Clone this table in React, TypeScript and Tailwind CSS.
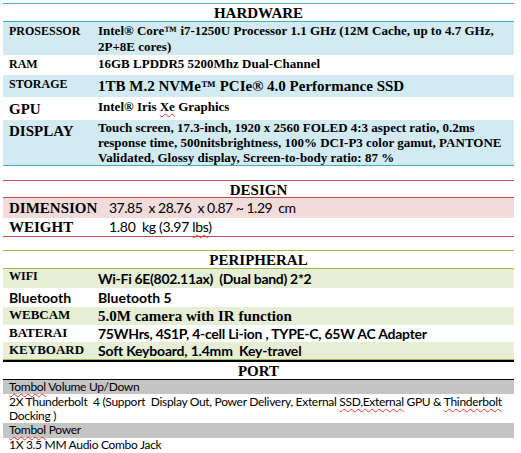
import React from 'react';

const serif = "font-['Liberation_Serif','Times_New_Roman',serif]";
const sans = "font-['Lato','Liberation_Sans',sans-serif]";
const squiggle = 'underline decoration-wavy decoration-[#e33] decoration-1 underline-offset-2';

const App = () => {
  return (
    <div className="w-[521px] h-[453px] bg-white text-black overflow-hidden pt-[3px]">
      <div className="ml-[3px] w-[511px]">
        {/* HARDWARE */}
        <div className="border-y border-[#4bacc6]">
          <div className={`${serif} h-[18px] border-b border-[#4bacc6] text-center text-[15px] leading-[18px] font-bold`}>
            HARDWARE
          </div>
          <div className={`${serif} flex h-[33px] bg-[#d2eaf1] font-bold`}>
            <div className="w-[95px] pl-[6px] pt-[1px] text-[12px] leading-[16px]">PROSESSOR</div>
            <div className="flex-1 pt-[1px] text-[13px] leading-[16px]">
              Intel® Core™ i7-1250U Processor 1.1 GHz (12M Cache, up to 4.7 GHz,
              <br />
              2P+8E cores)
            </div>
          </div>
          <div className={`${serif} flex h-[20px] font-bold`}>
            <div className="w-[95px] pl-[6px] text-[12px] leading-[18px]">RAM</div>
            <div className="flex-1 text-[13px] leading-[18px]">16GB LPDDR5 5200Mhz Dual-Channel</div>
          </div>
          <div className={`${serif} flex h-[22px] bg-[#d2eaf1] font-bold`}>
            <div className="w-[95px] pl-[6px] text-[12px] leading-[18px]">STORAGE</div>
            <div className="flex-1 text-[15px] leading-[22px]">1TB M.2 NVMe™ PCIe® 4.0 Performance SSD</div>
          </div>
          <div className={`${serif} flex h-[23px] font-bold`}>
            <div className="w-[95px] pl-[6px] text-[15px] leading-[24px]">GPU</div>
            <div className="flex-1 text-[13px] leading-[20px]">
              Intel® Iris <span className={squiggle}>Xe</span> Graphics
            </div>
          </div>
          <div className={`${serif} flex h-[45px] bg-[#d2eaf1] font-bold`}>
            <div className="w-[95px] pl-[6px] text-[15px] leading-[22px]">DISPLAY</div>
            <div className="flex-1 text-[13px] leading-[15px] pr-[8px]">
              Touch screen, 17.3-inch, 1920 x 2560 FOLED 4:3 aspect ratio, 0.2ms response time, 500nitsbrightness, 100% DCI-P3 color gamut, PANTONE Validated, Glossy display, Screen-to-body ratio: 87 %
            </div>
          </div>
        </div>

        {/* DESIGN */}
        <div className="mt-[14px] border-y border-[#c0504d]">
          <div className={`${serif} h-[17px] border-b border-[#c0504d] text-center text-[15px] leading-[18px] font-bold`}>
            DESIGN
          </div>
          <div className="flex h-[20px] bg-[#f2dbdb]">
            <div className={`${serif} w-[106px] pl-[6px] text-[15px] leading-[20px] font-bold`}>DIMENSION</div>
            <div className={`${sans} flex-1 text-[14px] leading-[20px] tracking-[-0.5px]`}>37.85&nbsp; x 28.76&nbsp; x 0.87 ~ 1.29&nbsp; cm</div>
          </div>
          <div className="flex h-[18px]">
            <div className={`${serif} w-[106px] pl-[6px] text-[15px] leading-[18px] font-bold`}>WEIGHT</div>
            <div className={`${sans} flex-1 text-[14px] leading-[18px] tracking-[-0.3px]`}>
              1.80&nbsp; kg (3.97 <span className={squiggle}>lbs</span>)
            </div>
          </div>
        </div>

        {/* PERIPHERAL */}
        <div className="mt-[13px] border-t border-[#9bbb59]">
          <div className={`${serif} h-[18px] border-b border-[#9bbb59] text-center text-[15px] leading-[19px] font-bold`}>
            PERIPHERAL
          </div>
          <div className="flex h-[19px] bg-[#e6eed5] font-bold">
            <div className={`${serif} w-[95px] pl-[6px] text-[12px] leading-[14px]`}>WIFI</div>
            <div className={`${sans} flex-1 text-[14px] leading-[19px] tracking-[-0.3px]`}>Wi-Fi 6E(802.11ax)&nbsp; (Dual band) 2*2</div>
          </div>
          <div className="flex h-[19px] font-bold">
            <div className={`${sans} w-[95px] pl-[6px] text-[14px] leading-[19px]`}>Bluetooth</div>
            <div className={`${sans} flex-1 text-[14px] leading-[19px]`}>Bluetooth 5</div>
          </div>
          <div className="flex h-[18px] bg-[#e6eed5] font-bold">
            <div className={`${serif} w-[95px] pl-[6px] text-[13px] leading-[15px]`}>WEBCAM</div>
            <div className={`${serif} flex-1 text-[15px] leading-[19px]`}>5.0M camera with IR function</div>
          </div>
          <div className="flex h-[17px] font-bold">
            <div className={`${serif} w-[95px] pl-[6px] text-[13px] leading-[15px]`}>BATERAI</div>
            <div className={`${sans} flex-1 text-[14px] leading-[18px] tracking-[-0.25px]`}>75WHrs, 4S1P, 4-cell Li-ion , TYPE-C, 65W AC Adapter</div>
          </div>
          <div className="flex h-[18px] bg-[#e6eed5] font-bold border-b border-[#9bbb59]">
            <div className={`${serif} w-[95px] pl-[6px] text-[13px] leading-[15px]`}>KEYBOARD</div>
            <div className={`${sans} flex-1 text-[14px] leading-[18px] tracking-[-0.2px]`}>Soft Keyboard, 1.4mm&nbsp; Key-travel</div>
          </div>
        </div>

        {/* PORT */}
        <div className="border-t-2 border-b border-black">
          <div className={`${serif} h-[18px] border-b border-black text-center text-[15px] leading-[19px] font-bold`}>
            PORT
          </div>
          <div className={`${sans} text-[12px] leading-[14px] tracking-[-0.3px]`}>
            <div className="h-[14px] bg-[#c4c4c4] pl-[6px]">
              <span className={squiggle}>Tombol</span> Volume Up/Down
            </div>
            <div className="h-[29px] pl-[6px] pr-[2px] pt-[1px]">
              2X Thunderbolt&nbsp; 4 (Support&nbsp; Display Out, Power Delivery, External <span className={squiggle}>SSD,External</span> GPU &amp; <span className={squiggle}>Thinderbolt</span> Docking )
            </div>
            <div className="h-[15px] bg-[#c4c4c4] pl-[6px]">
              <span className={squiggle}>Tombol</span> Power
            </div>
            <div className="h-[15px] pl-[6px]">1X 3.5 MM Audio Combo Jack</div>
          </div>
        </div>
      </div>
    </div>
  );
};

export default App;
